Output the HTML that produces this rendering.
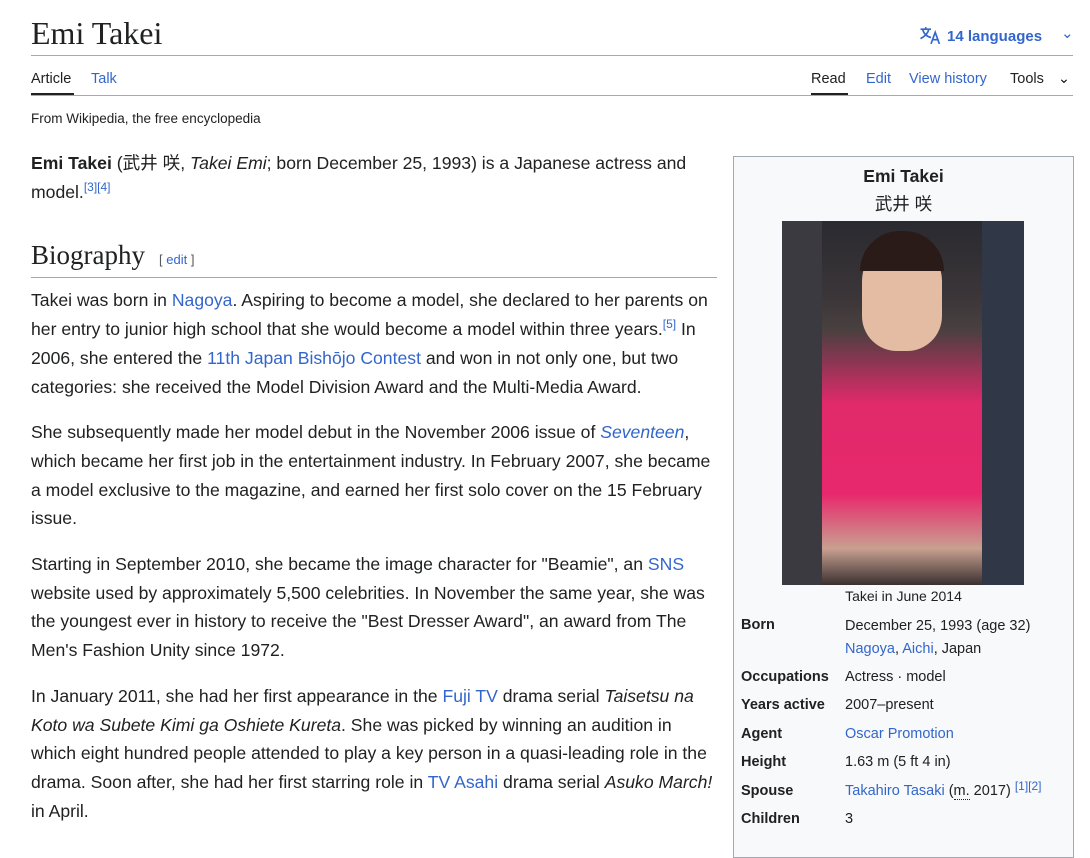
<!DOCTYPE html>
<html><head><meta charset="utf-8"><style>
body{margin:0;background:#fff;font-family:"Liberation Sans","Noto Sans CJK JP",sans-serif;color:#202122;width:1090px;height:830px;overflow:hidden;position:relative}
a{color:#3366cc;text-decoration:none}
.abs{position:absolute}
h1{position:absolute;left:31px;top:15px;margin:0;font:normal 32px "Liberation Serif",serif;}
.line{position:absolute;height:1px;background:#a2a9b1}
.tab{position:absolute;top:71px;font-size:14.5px}
.main{position:absolute;left:31px;top:149px;width:686px;font-size:17.6px;line-height:28.7px}
.main p{margin:0 0 17px}
sup{font-size:12px;line-height:1;vertical-align:7px}
h2{font:normal 27px "Liberation Serif",serif;margin:34px 0 8px;padding-bottom:6px;border-bottom:1px solid #a2a9b1;width:686px}
h2 span{font:13px "Liberation Sans",sans-serif;margin-left:14px;color:#54595d}
.ib{position:absolute;left:733px;top:156px;width:339px;height:700px;background:#f8f9fa;border:1px solid #a2a9b1;font-size:14.5px}
.row{position:absolute;left:7px;font-weight:bold;line-height:20px}
.val{position:absolute;left:111px;line-height:20px}
</style></head><body>
<h1>Emi Takei</h1>
<div class="abs" style="left:919px;top:25px;color:#3366cc;font-weight:bold;font-size:15px">
<svg width="24" height="21" viewBox="0 0 22 20" style="vertical-align:-5px;margin-right:4px"><path d="M1 4h10M6 2v2M3 4c1 4 4 7 8 8M9 4c-1 4-4 7-8 9M11 18l4-11 4 11M12.5 14h5" fill="none" stroke="#3366cc" stroke-width="1.6"/></svg>14 languages</div>
<div class="abs" style="left:1061px;top:24px;color:#3366cc;font-size:15px">⌄</div>
<div class="line" style="left:31px;top:55px;width:1042px"></div>
<div class="tab" style="left:31px">Article</div>
<div class="abs" style="left:31px;top:93px;width:43px;height:2px;background:#202122"></div>
<div class="tab" style="left:91px;color:#3366cc">Talk</div>
<div class="tab" style="left:811px">Read</div>
<div class="abs" style="left:811px;top:93px;width:37px;height:2px;background:#202122"></div>
<div class="tab" style="left:866px;color:#3366cc">Edit</div>
<div class="tab" style="left:909px;color:#3366cc">View history</div>
<div class="tab" style="left:1010px">Tools <span style="margin-left:10px">⌄</span></div>
<div class="line" style="left:31px;top:95px;width:1042px"></div>
<div class="abs" style="left:31px;top:111px;font-size:13.5px">From Wikipedia, the free encyclopedia</div>
<div class="main">
<p><b>Emi Takei</b> (武井 咲, <i>Takei Emi</i>; born December 25, 1993) is a Japanese actress and model.<sup><a>[3]</a><a>[4]</a></sup></p>
<h2>Biography<span>[ <a>edit</a> ]</span></h2>
<p>Takei was born in <a>Nagoya</a>. Aspiring to become a model, she declared to her parents on her entry to junior high school that she would become a model within three years.<sup><a>[5]</a></sup> In 2006, she entered the <a>11th Japan Bishōjo Contest</a> and won in not only one, but two categories: she received the Model Division Award and the Multi-Media Award.</p>
<p>She subsequently made her model debut in the November 2006 issue of <a><i>Seventeen</i></a>, which became her first job in the entertainment industry. In February 2007, she became a model exclusive to the magazine, and earned her first solo cover on the 15 February issue.</p>
<p>Starting in September 2010, she became the image character for "Beamie", an <a>SNS</a> website used by approximately 5,500 celebrities. In November the same year, she was the youngest ever in history to receive the "Best Dresser Award", an award from The Men's Fashion Unity since 1972.</p>
<p>In January 2011, she had her first appearance in the <a>Fuji TV</a> drama serial <i>Taisetsu na Koto wa Subete Kimi ga Oshiete Kureta</i>. She was picked by winning an audition in which eight hundred people attended to play a key person in a quasi-leading role in the drama. Soon after, she had her first starring role in <a>TV Asahi</a> drama serial <i>Asuko March!</i> in April.</p>
</div>
<div class="ib">
<div class="abs" style="left:0;width:339px;top:5px;text-align:center;font-size:17.5px;line-height:28px"><b>Emi Takei</b><br>武井 咲</div>
<div class="abs" style="left:48px;top:64px;width:242px;height:364px;background:linear-gradient(180deg,#2a2a30 0%,#3a3538 20%,#4a4040 30%,#e02a6a 50%,#e8286c 75%,#c8a090 90%,#3a3030 100%)">
<div class="abs" style="left:80px;top:20px;width:80px;height:110px;border-radius:40px 40px 35px 35px;background:#e4bca4"></div>
<div class="abs" style="left:78px;top:10px;width:84px;height:40px;border-radius:40px 40px 0 0;background:#2a1a18"></div>
<div class="abs" style="left:0;top:0;width:40px;height:364px;background:#3a3a40"></div>
<div class="abs" style="left:200px;top:0;width:42px;height:364px;background:#303848"></div>
</div>
<div class="abs" style="left:0;width:339px;top:431px;text-align:center;font-size:14px">Takei in June 2014</div>
<div class="row" style="top:458px">Born</div><div class="val" style="top:458px;line-height:23px">December 25, 1993 (age 32)<br><a>Nagoya</a>, <a>Aichi</a>, Japan</div>
<div class="row" style="top:510px">Occupations</div><div class="val" style="top:510px">Actress · model</div>
<div class="row" style="top:538px">Years active</div><div class="val" style="top:538px">2007–present</div>
<div class="row" style="top:567px">Agent</div><div class="val" style="top:567px"><a>Oscar Promotion</a></div>
<div class="row" style="top:595px">Height</div><div class="val" style="top:595px">1.63 m (5 ft 4 in)</div>
<div class="row" style="top:624px">Spouse</div><div class="val" style="top:624px"><a>Takahiro Tasaki</a> (<span style="border-bottom:1px dotted #202122">m.</span> 2017) <sup style="vertical-align:5px;line-height:0"><a>[1][2]</a></sup></div>
<div class="row" style="top:652px">Children</div><div class="val" style="top:652px">3</div>
</div>
</body></html>
